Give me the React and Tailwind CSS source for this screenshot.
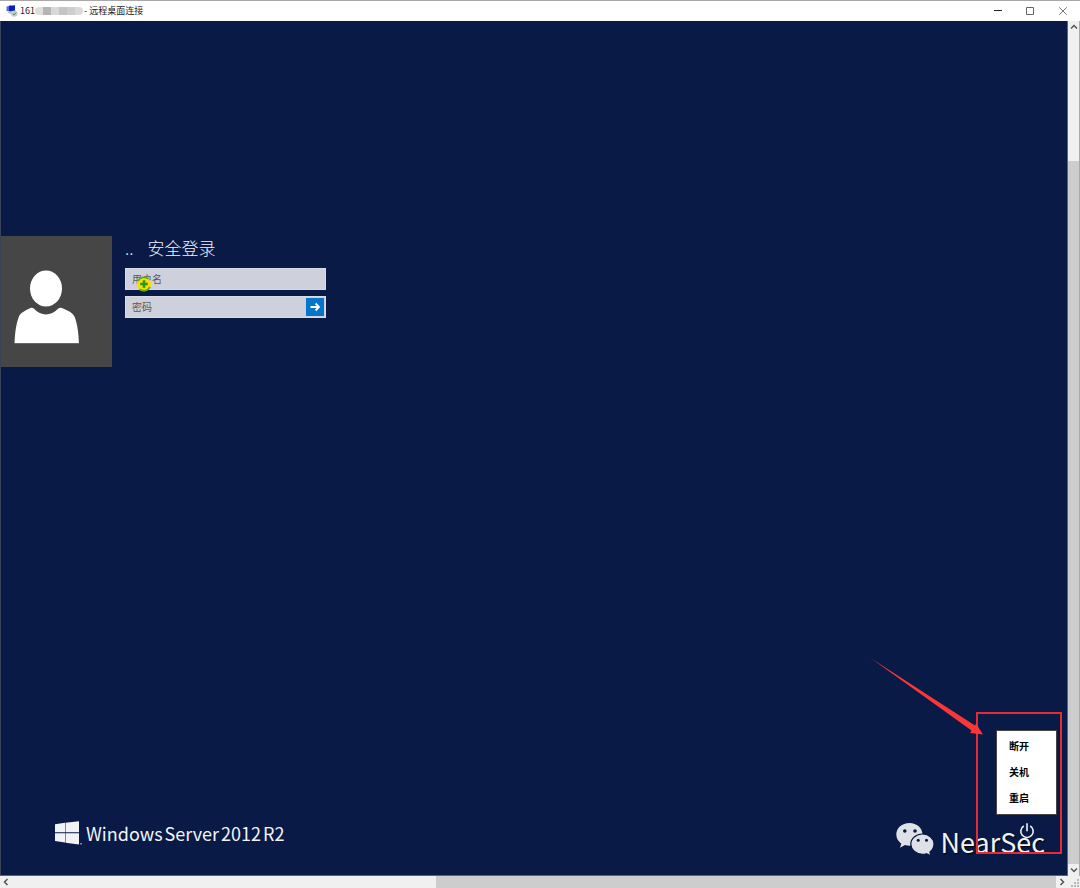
import React from "react";

function RemoteIcon() {
  return (
    <svg className="size-3 shrink-0" viewBox="0 0 12 12" aria-hidden="true">
      <path d="M.5 1.500 5 .5v6L.5 6z" fill="#5a70d8" />
      <path d="M3 .8 9 .2v6.800L3 6z" fill="#0a1fb5" />
      <path d="M2 6.500 6 7.500 5.500 9.500 2 8z" fill="#b9c0d4" />
      <circle cx="8.300" cy="8.600" r="3.200" fill="#c5cdc9" />
      <path d="m6.800 9 1.200 1 2-2.400" fill="none" stroke="#4d9a55" strokeWidth="1" />
    </svg>
  );
}

function TitleBar() {
  return (
    <header className="flex h-[21px] shrink-0 items-center justify-between border-t border-[#a8a8a8] bg-white">
      <div className="flex items-center pl-1.5 text-[9px] leading-3 text-[#222]">
        <RemoteIcon />
        <h1 className="flex items-center pl-0.5">
          <span>161</span>
          <span className="flex h-2 w-12 overflow-hidden rounded-full" aria-hidden="true">
            <span className="w-2 bg-[#dedede]" />
            <span className="w-2 bg-[#b4b4b4]" />
            <span className="w-2 bg-[#d8d8d8]" />
            <span className="w-2 bg-[#c4c4c4]" />
            <span className="w-2 bg-[#cecece]" />
            <span className="w-2 bg-[#dadada]" />
          </span>
          <span className="pl-px">- 远程桌面连接</span>
        </h1>
      </div>
      <div className="flex">
        <button type="button" aria-label="最小化" className="flex h-5 w-8 items-center justify-center">
          <svg className="size-2" viewBox="0 0 8 8"><path d="M0 3.500h8" stroke="#222" strokeWidth="1" /></svg>
        </button>
        <button type="button" aria-label="最大化" className="flex h-5 w-8 items-center justify-center">
          <svg className="size-2" viewBox="0 0 8 8"><path d="M.5.5h7v7h-7z" fill="none" stroke="#666" strokeWidth="1" /></svg>
        </button>
        <button type="button" aria-label="关闭" className="flex h-5 w-[34px] items-center justify-center">
          <svg className="size-2" viewBox="0 0 8 8"><path d="m.3.3 7.400 7.400m0-7.400L.3 7.700" stroke="#666" strokeWidth=".9" /></svg>
        </button>
      </div>
    </header>
  );
}

function Avatar() {
  return (
    <div className="h-[131px] w-[111px] shrink-0 bg-[#464646]">
      <svg className="h-full w-full" viewBox="1 0 111 131" aria-hidden="true">
        <ellipse cx="46" cy="52.500" rx="16" ry="18" fill="#fff" />
        <path
          d="M14.500 107C15 96 16 88 18.500 81C20 76 24 74.500 31 71C32 70.700 33 71 34 72C41 79.500 51 79.500 58 72C59 71 60 70.700 61 71C69 74 73 76 75 81C77.500 88 78.500 96 79 107Z"
          transform="translate(0 .8)"
          fill="#fff"
        />
        <path d="M1 107.300h111V131H1z" fill="#464646" />
      </svg>
    </div>
  );
}

function BusyCursor() {
  return (
    <svg className="pointer-events-none absolute top-2 left-[11px] size-4" viewBox="0 0 16 16" aria-hidden="true">
      <circle cx="8" cy="8" r="7.200" fill="#f9dc05" />
      <path d="M2 5A7 7 0 0 1 12.500 2.800" fill="none" stroke="#58ad27" strokeWidth="1.800" />
      <path d="M14 11A7 7 0 0 1 3.500 13.200" fill="none" stroke="#58ad27" strokeWidth="1.800" />
      <path d="M8 4.200v7.600M4.200 8h7.600" stroke="#2f941d" strokeWidth="2.600" />
    </svg>
  );
}

function LoginForm() {
  const field =
    "h-[22px] w-full border border-[#d9dce5] bg-[#ced1db] px-[6px] pb-0.5 text-[10px] text-[#333] outline-none placeholder:text-[#55585f] placeholder:opacity-100";
  return (
    <form className="w-[201px]" onSubmit={(e) => e.preventDefault()}>
      <h2 className="flex h-8 items-start gap-3.5 text-[17px] leading-6 font-light text-[#f2f4fa]">
        <span>..</span>
        <span>安全登录</span>
      </h2>
      <div className="flex flex-col gap-1.5">
        <div className="relative flex">
          <input type="text" aria-label="用户名" placeholder="用户名" className={field} />
          <BusyCursor />
        </div>
        <div className="relative flex">
          <input type="password" aria-label="密码" placeholder="密码" className={field} />
          <button type="submit" aria-label="登录" className="absolute top-0.5 right-0.5 flex h-[18px] w-[18px] items-center justify-center bg-[#0575ca]">
            <svg className="size-2.5" viewBox="0 0 10 10"><path d="M.5 5H9M5.600 1.500 9 5 5.600 8.500" fill="none" stroke="#fff" strokeWidth="1.800" /></svg>
          </button>
        </div>
      </div>
    </form>
  );
}

function WindowsBrand() {
  return (
    <div className="flex items-center gap-1 text-[#f2f3f7]">
      <svg className="h-6 w-[27px]" viewBox="0 0 27 24" fill="currentColor" aria-hidden="true">
        <path d="M0 3.200 10 1.800v9.500H0zM10.500 1.700 24 .2v11.100H10.500zM0 12.300h10v9.200L0 20zM10.500 12.300H24v11.100l-13.500-1.700zM25 22.500h2v.8h-2z" />
      </svg>
      <p className="flex gap-0.5 text-[18px] leading-6">
        <span>Windows</span> <span>Server</span> <span>2012</span> <span>R2</span>
      </p>
    </div>
  );
}

function PowerMenu() {
  return (
    <div className="absolute right-0 bottom-full mb-2 flex h-[85px] w-[61px] flex-col justify-center gap-0.5 border border-[#464646] bg-white pb-0.5 text-[10px] leading-6 font-bold text-black">
      {["断开", "关机", "重启"].map((label) => (
        <button key={label} type="button" className="h-6 pl-3 text-left">{label}</button>
      ))}
    </div>
  );
}

function PowerControl() {
  return (
    <div className="relative flex w-[61px] justify-center">
      <button type="button" aria-label="电源" className="size-4">
        <svg className="size-4" viewBox="0 0 16 16" fill="none" stroke="#f2f3f7" strokeWidth="1.600">
          <path d="M8 .3v8M4.800 3A6.200 6.200 0 1 0 11.200 3" />
        </svg>
      </button>
      <PowerMenu />
    </div>
  );
}

function Watermark() {
  return (
    <div className="pointer-events-none absolute right-[22px] bottom-[17px] flex items-start gap-1.5">
      <svg className="h-[34px] w-[38px]" viewBox="0 0 38 34" aria-hidden="true">
        <path d="M13.500 1C6 1 .3 6 .3 12.500c0 3.800 2 7 5 9.200L4 25.700l5-2.600c1.500.4 3 .7 4.500.7 7.300 0 13-5 13-11.300C26.500 6 20.800 1 13.500 1z" fill="#dfe1e8" />
        <path d="M26.500 12C20 12 14.800 16.500 14.800 22s5.200 10.300 11.700 10.300c1.400 0 2.700-.2 3.900-.6l4.600 2-1.100-3.600c2.500-1.900 4.100-4.800 4.100-8.100C38 16.500 33 12 26.500 12z" fill="#dfe1e8" stroke="#091944" strokeWidth="1.200" />
        <circle cx="8.800" cy="9" r="1.800" fill="#091944" />
        <circle cx="19" cy="9" r="1.800" fill="#091944" />
        <circle cx="22.200" cy="18.300" r="1.500" fill="#091944" />
        <circle cx="30.500" cy="18.300" r="1.500" fill="#091944" />
      </svg>
      <p className="pt-1 text-[27px] leading-8 text-[#f1f2f6] [text-shadow:1px_1px_1px_#000]">NearSec</p>
    </div>
  );
}

function Callout() {
  return (
    <div className="pointer-events-none absolute right-[5px] bottom-[21px] h-[142px] w-[86px] border-2 border-[#e52c34]" aria-hidden="true">
      <svg className="absolute -top-14 right-[76px] h-[78px] w-[114px]" viewBox="0 0 114 78">
        <path d="M.5 0 105 67.500 106 65.500 113 76.500 100 75 101.500 72.500z" fill="#fb3638" />
      </svg>
    </div>
  );
}

function Desktop() {
  return (
    <main className="relative flex min-w-0 flex-1 flex-col justify-between overflow-hidden border-r border-b border-l border-[#59638a] border-l-[#3b4258] bg-[#081a45] pt-[215px]">
      <section className="flex gap-[13px]">
        <Avatar />
        <LoginForm />
      </section>
      <footer className="flex items-end justify-between pr-2.5 pb-[30px] pl-[54px]">
        <WindowsBrand />
        <div className="pb-1.5">
          <PowerControl />
        </div>
      </footer>
      <Watermark />
      <Callout />
    </main>
  );
}

function Chevron({ d }) {
  return (
    <svg className="size-2" viewBox="0 0 8 8" aria-hidden="true">
      <path d={d} fill="none" stroke="#555" strokeWidth="1.500" />
    </svg>
  );
}

function VerticalScrollbar() {
  const arrowButton = "flex h-3 w-full shrink-0 items-center justify-center";
  return (
    <div className="flex w-3 shrink-0 flex-col border-r border-[#aaa] bg-[#f0f0f0]">
      <button type="button" aria-label="向上滚动" className={arrowButton}><Chevron d="M1 5.500 4 2.500l3 3" /></button>
      <div className="flex flex-1 flex-col">
        <div className="h-32 shrink-0" />
        <div className="flex-1 bg-[#cdcdcd]" />
      </div>
      <button type="button" aria-label="向下滚动" className={arrowButton}><Chevron d="m1 2.500 3 3 3-3" /></button>
    </div>
  );
}

function HorizontalScrollbar() {
  const arrowButton = "flex size-3 shrink-0 items-center justify-center";
  return (
    <div className="flex h-3 shrink-0 bg-[#f0f0f0]">
      <button type="button" aria-label="向左滚动" className={arrowButton}><Chevron d="M5.500 1 2.500 4l3 3" /></button>
      <div className="flex flex-1">
        <div className="w-[40.6%]" />
        <div className="flex-1 bg-[#cdcdcd]" />
      </div>
      <button type="button" aria-label="向右滚动" className={arrowButton}><Chevron d="m2.500 1 3 3-3 3" /></button>
      <svg className="h-3 w-3" viewBox="0 0 12 12" fill="#b8b8b8" aria-hidden="true">
        <path d="M9 3h2v2H9zM6 6h2v2H6zM9 6h2v2H9zM3 9h2v2H3zM6 9h2v2H6zM9 9h2v2H9z" />
      </svg>
    </div>
  );
}

export default function App() {
  return (
    <div className="flex min-h-screen flex-col bg-white font-['Noto_Sans_CJK_SC',sans-serif]" lang="zh-CN">
      <TitleBar />
      <div className="flex flex-1">
        <Desktop />
        <VerticalScrollbar />
      </div>
      <HorizontalScrollbar />
    </div>
  );
}
